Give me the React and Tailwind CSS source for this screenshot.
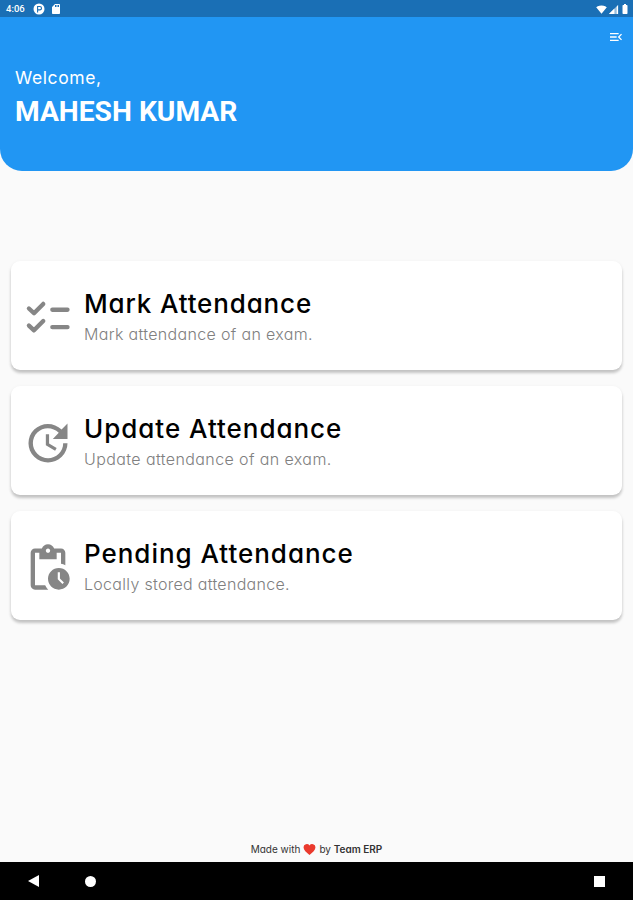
import React from 'react';
import { MdUpdate, MdPendingActions, MdMenuOpen, MdSdCard, MdSignalWifi4Bar, MdBatteryFull } from 'react-icons/md';

function ChecklistIcon({ className }) {
  return (
    <svg viewBox="0 0 24 24" className={className} fill="none" stroke="currentColor" strokeWidth="2" strokeLinecap="round" strokeLinejoin="round">
      <path d="M3.2 7.6 5.54 9.8 9.8 5.5M3.2 15.5 5.54 17.7 9.8 13.4M14 8.2h7M14 16.2h7" />
    </svg>
  );
}

const items = [
  {
    title: 'Mark Attendance',
    subtitle: 'Mark attendance of an exam.',
    icon: ChecklistIcon,
    titleClass: 'tracking-[0.85px]',
    subtitleClass: 'tracking-[0.33px]'
  },
  {
    title: 'Update Attendance',
    subtitle: 'Update attendance of an exam.',
    icon: MdUpdate,
    titleClass: 'tracking-[0.97px]',
    subtitleClass: 'tracking-[0.4px]'
  },
  {
    title: 'Pending Attendance',
    subtitle: 'Locally stored attendance.',
    icon: MdPendingActions,
    titleClass: 'tracking-[0.97px]',
    subtitleClass: 'tracking-[0.3px]'
  }
];

export default function App() {
  return (
    <div className="flex h-[900px] w-[633px] flex-col overflow-hidden bg-[#fafafa] font-['Inter','Open_Sans',sans-serif] [font-feature-settings:'cv11']">
      {/* Header */}
      <header className="h-[171px] shrink-0 overflow-hidden rounded-b-[22px] bg-[#2196f3] text-white">
        <div className="flex h-[17px] items-center justify-between bg-[#1a6fb5] pt-px pr-[2px] pl-[6px]">
          <div className="flex items-center">
            <span className="w-[20px] font-['Roboto',sans-serif] text-[9.5px] leading-none font-medium">4:06</span>
            <svg viewBox="0 0 12 12" className="ml-[7px] size-[12px]">
              <circle cx="6" cy="6" r="5.5" fill="#fff" />
              <path d="M4.6 9.6V3.5h2.2a1.7 1.7 0 0 1 0 3.4H4.6" fill="none" stroke="#1a6fb5" strokeWidth="1.1" />
            </svg>
            <MdSdCard className="ml-[5px] size-[12px]" />
          </div>
          <div className="flex items-center">
            <MdSignalWifi4Bar className="size-[11px]" />
            <svg viewBox="0 0 12 12" className="ml-px size-[11px]">
              <path d="M1 11 11 1v10z" fill="#fff" fillOpacity="0.55" />
              <path d="M1 11 7 5v6zM9.5 3 11 1v10H9.5z" fill="#fff" />
            </svg>
            <MdBatteryFull className="size-[12px]" />
          </div>
        </div>
        <div className="flex justify-end pt-[12px] pr-[9px]">
          <MdMenuOpen className="size-[16px]" />
        </div>
        <div className="pl-[15px]">
          <p className="mt-[21px] text-[17.5px] leading-[24px] tracking-[0.6px]">Welcome,</p>
          <h1 className="mt-[5px] font-['Roboto',sans-serif] text-[28.2px] leading-[34px] font-bold">MAHESH KUMAR</h1>
        </div>
      </header>

      {/* Menu */}
      <main className="flex flex-1 flex-col gap-[16px] px-[11px] pt-[90px]">
        {items.map(({ title, subtitle, icon: Icon, titleClass, subtitleClass }) => (
          <div key={title} className="flex h-[109px] items-center rounded-[9px] bg-white pl-[11px] shadow-[0_3px_3px_rgba(0,0,0,0.2),0_1px_4px_rgba(0,0,0,0.05)]">
            <Icon className="mt-[5px] size-[52px] shrink-0 text-[#868686]" />
            <div className="mt-[2px] ml-[10px] whitespace-nowrap">
              <h2 className={`text-[26px] leading-[36px] font-medium text-black ${titleClass}`}>{title}</h2>
              <p className={`text-[16px] leading-[25px] font-light text-[#808080] ${subtitleClass}`}>{subtitle}</p>
            </div>
          </div>
        ))}
      </main>

      {/* Footer */}
      <footer className="flex h-[26px] shrink-0 items-center justify-center text-[10px] text-[#333]">
        <span>Made with</span>
        <svg viewBox="0 0 24 24" className="mx-[3px] size-[13px]">
          <path d="M12 22C6 17.5 1 13 1 8a6 6 0 0 1 11-3.3A6 6 0 0 1 23 8c0 5-5 9.5-11 14z" fill="#ea3a2d" />
        </svg>
        <span>by <b className="font-semibold">Team ERP</b></span>
      </footer>
      <nav className="flex h-[38px] shrink-0 items-center bg-black pl-[28px]">
        <svg viewBox="0 0 12 12" className="size-[12px]">
          <path d="M0 6 11 0v12z" fill="#fff" />
        </svg>
        <div className="ml-[45px] size-[11px] rounded-full bg-white" />
        <div className="mr-[28px] ml-auto size-[11px] bg-white" />
      </nav>
    </div>
  );
}
